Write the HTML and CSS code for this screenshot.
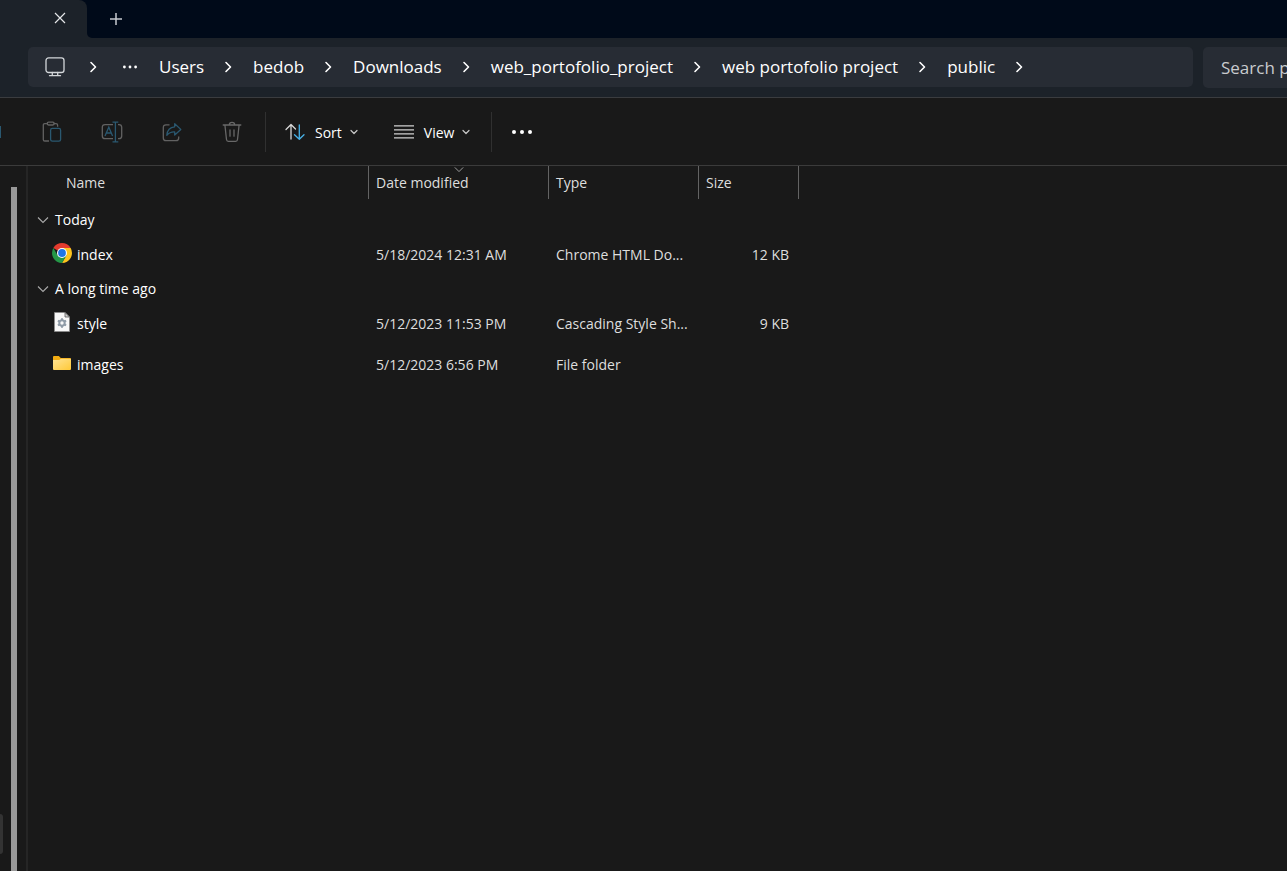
FILE: index.html
```html
<!DOCTYPE html>
<html lang="en">
<head>
<meta charset="utf-8">
<meta name="viewport" content="width=device-width, initial-scale=1">
<title>public</title>
<link rel="stylesheet" href="styles.css">
</head>
<body>
<svg class="defs" aria-hidden="true">
  <symbol id="chevron" viewBox="0 0 12 12"><path d="M4 1.5 8.5 6 4 10.5" fill="none" stroke="currentColor" stroke-width="1.6" stroke-linecap="round" stroke-linejoin="round"/></symbol>
  <symbol id="down" viewBox="0 0 8 8"><path d="M1 2.5 4 5.5 7 2.5" fill="none" stroke="currentColor" stroke-width="1.2" stroke-linecap="round" stroke-linejoin="round"/></symbol>
  <symbol id="fold" viewBox="0 0 12 8"><path d="M1 1.5 6 6.5 11 1.5" fill="none" stroke="currentColor" stroke-width="1.1"/></symbol>
</svg>

<header class="tabs">
  <div class="tab">
    <button class="tab-button" type="button" aria-label="Close tab">
      <svg width="12" height="12" viewBox="0 0 12 12"><path d="M1 1 11 11M11 1 1 11" stroke="#e4e6e8" stroke-width="1.2" fill="none"/></svg>
    </button>
  </div>
  <div class="strip">
    <button class="tab-button" type="button" aria-label="New tab">
      <svg width="12" height="12" viewBox="0 0 12 12"><path d="M6 0V12M0 6H12" stroke="#c6cad0" stroke-width="1.5" fill="none"/></svg>
    </button>
  </div>
</header>

<div class="address">
  <nav class="crumbs" aria-label="Path">
    <button class="crumb-icon" type="button" aria-label="This PC">
      <svg width="20" height="20" viewBox="0 0 20 20" fill="none" stroke="#d3d6d9" stroke-width="1.3"><rect x="1" y=".9" width="18" height="14.6" rx="2.6"/><path d="M7.3 15.5V18.4M12.7 15.5V18.4M4.5 18.7H15.5" stroke-linecap="round"/></svg>
    </button>
    <svg class="sep"><use href="#chevron"/></svg>
    <button class="crumb-icon more" type="button" aria-label="More folders">
      <svg width="16" height="4" viewBox="0 0 16 4" fill="#fff"><circle cx="2.4" cy="2" r="1.4"/><circle cx="8" cy="2" r="1.4"/><circle cx="13.6" cy="2" r="1.4"/></svg>
    </button>
    <a class="crumb" href="#users">Users</a>
    <svg class="sep"><use href="#chevron"/></svg>
    <a class="crumb" href="#bedob">bedob</a>
    <svg class="sep"><use href="#chevron"/></svg>
    <a class="crumb" href="#downloads">Downloads</a>
    <svg class="sep"><use href="#chevron"/></svg>
    <a class="crumb" href="#web_portofolio_project">web_portofolio_project</a>
    <svg class="sep"><use href="#chevron"/></svg>
    <a class="crumb" href="#web-portofolio-project">web portofolio project</a>
    <svg class="sep"><use href="#chevron"/></svg>
    <a class="crumb" href="#public">public</a>
    <svg class="sep"><use href="#chevron"/></svg>
  </nav>
  <input class="search" type="text" placeholder="Search public" aria-label="Search public">
</div>

<div class="toolbar">
  <span class="copy-edge"></span>
  <div class="tools">
    <button class="tool" type="button" aria-label="Paste" disabled>
      <svg width="20" height="22" viewBox="0 0 20 22" fill="none" stroke="#626262" stroke-width="1.3"><path d="M6 2.6H2.8Q1.3 2.6 1.3 4.1V18.4Q1.3 20 2.8 20H7M11.5 2.6H14Q15.6 2.6 15.6 4.1V5.8"/><rect x="5.2" y="1.2" width="7" height="2.8" rx="1.4"/><rect x="8.6" y="7.4" width="10" height="12.8" rx="1.8" stroke="#2a5870"/></svg>
    </button>
    <button class="tool" type="button" aria-label="Rename" disabled>
      <svg width="22" height="22" viewBox="0 0 22 22" fill="none" stroke="#626262" stroke-width="1.3"><path d="M12 3.6H4Q1.3 3.6 1.3 6.3V15Q1.3 17.7 4 17.7H12M17 3.6H18Q20.7 3.6 20.7 6.3V15Q20.7 17.7 18 17.7H17"/><path d="M4 15 7.8 6.2 11.6 15M5.3 12H10.3M14.4 1.2V20.8M11.5 1.2H17.3M11.5 20.8H17.3" stroke="#2a5870"/></svg>
    </button>
    <button class="tool" type="button" aria-label="Share" disabled>
      <svg width="20" height="20" viewBox="0 0 20 20" fill="none" stroke="#626262" stroke-width="1.3" stroke-linejoin="round"><path d="M7.5 2.9H4Q1.3 2.9 1.3 5.6V16Q1.3 18.7 4 18.7H14Q16.7 18.7 16.7 16V14.5"/><path d="M12.7 1.7 18.8 7.4 12.7 13V9.8Q8 9.5 4.8 13.3 5.5 5.2 12.7 4.8Z" stroke="#2a5870"/></svg>
    </button>
    <button class="tool" type="button" aria-label="Delete" disabled>
      <svg width="20" height="22" viewBox="0 0 20 22" fill="none" stroke="#686868" stroke-width="1.3" stroke-linecap="round"><path d="M1.2 4H18.8M7.3 4Q7.3 1.4 10 1.4 12.7 1.4 12.7 4M2.9 4 4.5 18.5Q4.7 20.3 6.3 20.3H13.7Q15.3 20.3 15.5 18.5L17.1 4M8 9V15.2M12 9V15.2"/></svg>
    </button>
  </div>
  <div class="menus">
    <button class="menu" type="button">
      <svg width="20" height="18" viewBox="0 0 20 18" fill="none" stroke-width="1.3" stroke-linecap="round" stroke-linejoin="round"><path d="M6 16V1.5M1 6.5 6 1.5 10.5 6" stroke="#d8d8d8"/><path d="M14.3 2V16.2M9.5 11.7 14.3 16.3 19 11.7" stroke="#48b2e8"/></svg>
      <span class="menu-label">Sort</span>
      <svg class="caret"><use href="#down"/></svg>
    </button>
    <button class="menu" type="button">
      <svg width="20" height="14" viewBox="0 0 20 14" stroke="#cfcfcf" stroke-width="1.1"><path d="M0 .9H20M0 4.9H20M0 8.9H20M0 12.9H20"/></svg>
      <span class="menu-label">View</span>
      <svg class="caret"><use href="#down"/></svg>
    </button>
  </div>
  <button class="overflow" type="button" aria-label="See more">
    <svg width="22" height="6" viewBox="0 0 22 6" fill="#fff"><circle cx="3" cy="3" r="2"/><circle cx="11" cy="3" r="2"/><circle cx="19" cy="3" r="2"/></svg>
  </button>
</div>

<div class="body">
  <aside class="side"><span class="side-item"></span><span class="scrollbar"></span></aside>
  <main class="files">
    <table class="list">
      <colgroup><col class="c-name"><col class="c-date"><col class="c-type"><col class="c-size"></colgroup>
      <thead>
        <tr>
          <th class="name-head">Name</th>
          <th class="sorted">Date modified<svg class="sort-mark" viewBox="0 0 12 8"><use href="#fold"/></svg></th>
          <th>Type</th>
          <th>Size</th>
        </tr>
      </thead>
      <tbody>
        <tr class="group"><th colspan="4"><button class="fold" type="button"><svg width="12" height="8"><use href="#fold"/></svg>Today</button></th></tr>
        <tr class="file">
          <td><a class="file-name" href="#index">
            <svg width="20" height="20" viewBox="0 0 20 20"><path d="M10 10 1.34 5A10 10 0 0 1 18.66 5Z" fill="#e33b2e"/><path d="M10 5H18.66A10 10 0 0 1 10 20L14.33 12.5Z" fill="#fcc31e"/><path d="M1.34 5A10 10 0 0 0 10 20L14.33 12.5H10L5.67 12.5Z" fill="#249747"/><circle cx="10" cy="10" r="5" fill="#fff"/><circle cx="10" cy="10" r="3.9" fill="#1f75e8"/></svg>index</a></td>
          <td>5/18/2024 12:31 AM</td><td>Chrome HTML Do...</td><td class="size">12 KB</td>
        </tr>
        <tr class="group"><th colspan="4"><button class="fold" type="button"><svg width="12" height="8"><use href="#fold"/></svg>A long time ago</button></th></tr>
        <tr class="file">
          <td><a class="file-name" href="#style">
            <svg width="20" height="20" viewBox="0 0 20 20"><path d="M2.5 .5H13L17.5 5V19.5H2.5Z" fill="#f8f8f8" stroke="#8a8a8a" stroke-width=".8"/><path d="M13 .5V5H17.5Z" fill="#d0d0d0" stroke="#555" stroke-width=".8"/><circle cx="10" cy="11" r="2.7" fill="none" stroke="#8f9ba7" stroke-width="2"/><path d="M10 6.3V8M10 14V15.7M5.9 8.6 7.4 9.5M12.6 12.5 14.1 13.4M5.9 13.4 7.4 12.5M12.6 9.5 14.1 8.6" stroke="#8f9ba7" stroke-width="2"/></svg>style</a></td>
          <td>5/12/2023 11:53 PM</td><td>Cascading Style Sh...</td><td class="size">9 KB</td>
        </tr>
        <tr class="file">
          <td><a class="file-name" href="#images">
            <svg width="20" height="20" viewBox="0 0 20 20"><defs><linearGradient id="fold-fill" x1="0" y1="0" x2="1" y2="1"><stop offset="0" stop-color="#ffe394"/><stop offset="1" stop-color="#ffc937"/></linearGradient></defs><path d="M1 4Q1 3 2 3H6.8L8.8 5H18Q19 5 19 6V9H1Z" fill="#f2ac12"/><path d="M1 7H7.2L9 5.8H19V16Q19 17 18 17H2Q1 17 1 16Z" fill="url(#fold-fill)"/></svg>images</a></td>
          <td>5/12/2023 6:56 PM</td><td>File folder</td><td class="size"></td>
        </tr>
      </tbody>
    </table>
  </main>
</div>
</body>
</html>
```

FILE: styles.css
```css
* { box-sizing: border-box; }

body {
  display: flex;
  flex-direction: column;
  min-height: 100vh;
  margin: 0;
  overflow-x: hidden;
  background: #191919;
  color: #fff;
  font: 14px/20px "Open Sans", "Noto Sans", sans-serif;
}

button {
  display: flex;
  align-items: center;
  padding: 0;
  border: 0;
  background: none;
  color: inherit;
  font: inherit;
}

a { color: inherit; text-decoration: none; }
svg { display: block; flex: none; }
.defs { position: absolute; width: 0; height: 0; }

/* Tab strip */
.tabs { display: flex; height: 38px; background: #1c2229; }
.tab {
  display: flex;
  justify-content: flex-end;
  width: 87px;
  padding-right: 17px;
  border-radius: 0 8px 0 0;
  background: #1c2229;
  box-shadow: 8px -8px 0 #000a19;
  clip-path: inset(0 -8px 0 0);
}
.tab-button { justify-content: center; width: 20px; height: 36px; }
.strip {
  flex: 1;
  padding-left: 19px;
  border-radius: 0 0 0 5px;
  background: #000a19;
}
.strip .tab-button { height: 38px; }

/* Address row */
.address {
  display: flex;
  gap: 10px;
  height: 60px;
  padding: 9px 0 9px 28px;
  border-bottom: 1px solid #3a3c3f;
  background: #1c2229;
}
.crumbs {
  display: flex;
  flex: 1;
  align-items: center;
  gap: 18px;
  height: 40px;
  padding-left: 17px;
  border-radius: 5px;
  background: #272c34;
  font-size: 17px;
  white-space: nowrap;
}
.crumb-icon { width: 24px; height: 20px; }
.crumb-icon.more { justify-content: center; width: 23px; }
.sep { width: 12px; height: 12px; margin-right: 1px; }
.search {
  width: 84px;
  height: 41px;
  padding: 0 0 0 18px;
  border: 0;
  border-radius: 5px 0 0 5px;
  background: #272c34;
  color: #fff;
  font: 17px/20px "Open Sans", "Noto Sans", sans-serif;
}
.search::placeholder { color: #c9cbce; opacity: 1; }

/* Command bar */
.toolbar {
  display: flex;
  align-items: center;
  height: 68px;
  border-bottom: 1px solid #3b3b3b;
}
.copy-edge { width: 1px; height: 12px; background: #2a5870; }
.tools {
  display: flex;
  gap: 20px;
  height: 40px;
  padding: 0 13px 0 31px;
  border-right: 1px solid #303030;
}
.tool { justify-content: center; width: 40px; }
.menus {
  display: flex;
  gap: 36px;
  height: 40px;
  padding: 0 21px 0 19px;
  border-right: 1px solid #303030;
}
.menu { gap: 8px; }
.menu-label { padding: 2px 0 0 2px; }
.caret { width: 8px; height: 8px; color: #c8c8c8; }
.overflow { padding: 16px 19px; }

/* Body */
.body { display: flex; flex: 1; }
.side {
  display: flex;
  align-items: stretch;
  justify-content: space-between;
  width: 28px;
  padding: 21px 8px 0 0;
  border-right: 2px solid #252525;
}
.side-item {
  align-self: flex-end;
  width: 3px;
  height: 40px;
  margin-bottom: 17px;
  border-radius: 0 3px 3px 0;
  background: #333;
}
.scrollbar { width: 6px; margin-right: 1px; background: #999; }
.files { flex: 1; }

.list { width: 771px; border-collapse: separate; border-spacing: 0; table-layout: fixed; }
.c-name { width: 341px; }
.c-date { width: 180px; }
.c-type { width: 150px; }
.c-size { width: 100px; }
.list th, .list td { padding: 0 0 0 7px; font-weight: 400; text-align: left; white-space: nowrap; }
.list thead th {
  position: relative;
  height: 33px;
  border-right: 1px solid #636363;
  color: #dedede;
}
.list thead .name-head { padding-left: 38px; }
.sort-mark { position: absolute; top: 0; left: 50%; width: 10px; height: 7px; margin-left: -5px; color: #aaa; }
.list tbody::before { content: ""; display: block; height: 7px; }
.list .group th { height: 28px; padding-left: 9px; }
.fold { gap: 6px; }
.fold svg { color: #aaa; }
.file td { height: 41px; color: #dedede; }
.list .file td:first-child { padding-left: 24px; color: #fff; }
.file-name { display: flex; align-items: center; gap: 5px; }
.file-name svg { height: 24px; padding-bottom: 4px; }
.list .file .size { padding-right: 10px; text-align: right; }
```
